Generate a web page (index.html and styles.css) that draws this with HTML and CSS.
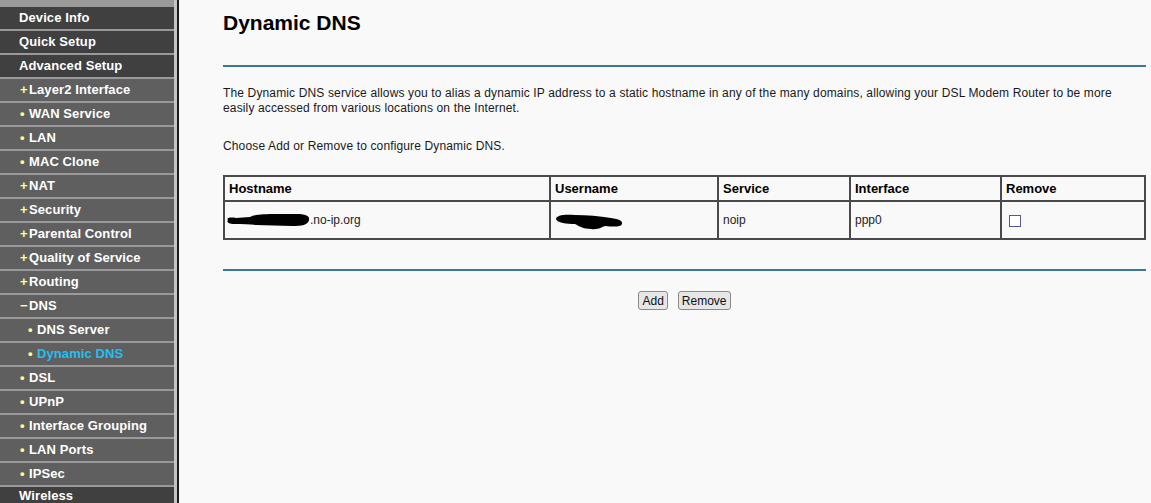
FILE: index.html
```html
<!DOCTYPE html>
<html lang="en">
<head>
    <meta charset="UTF-8">
    <title>Dynamic DNS</title>
    <link rel="stylesheet" href="styles.css">
</head>
<body>

<div class="page">

    <!-- Left menu -->
    <div class="menu">
        <div class="item top">Device Info</div>
        <div class="item top">Quick Setup</div>
        <div class="item top">Advanced Setup</div>
        <div class="item sub"><span class="mark">+</span>Layer2 Interface</div>
        <div class="item sub"><span class="mark">&bull;</span>WAN Service</div>
        <div class="item sub"><span class="mark">&bull;</span>LAN</div>
        <div class="item sub"><span class="mark">&bull;</span>MAC Clone</div>
        <div class="item sub"><span class="mark">+</span>NAT</div>
        <div class="item sub"><span class="mark">+</span>Security</div>
        <div class="item sub"><span class="mark">+</span>Parental Control</div>
        <div class="item sub"><span class="mark">+</span>Quality of Service</div>
        <div class="item sub"><span class="mark">+</span>Routing</div>
        <div class="item sub"><span class="mark">&minus;</span>DNS</div>
        <div class="item subsub"><span class="mark">&bull;</span>DNS Server</div>
        <div class="item subsub active"><span class="mark">&bull;</span>Dynamic DNS</div>
        <div class="item sub"><span class="mark">&bull;</span>DSL</div>
        <div class="item sub"><span class="mark">&bull;</span>UPnP</div>
        <div class="item sub"><span class="mark">&bull;</span>Interface Grouping</div>
        <div class="item sub"><span class="mark">&bull;</span>LAN Ports</div>
        <div class="item sub"><span class="mark">&bull;</span>IPSec</div>
        <div class="item top last">Wireless</div>
    </div>

    <!-- Main content -->
    <div class="content">
        <h1>Dynamic DNS</h1>
        <div class="rule"></div>

        <p class="intro">The Dynamic DNS service allows you to alias a dynamic IP address to a static hostname in any of the many domains, allowing your DSL Modem Router to be more easily accessed from various locations on the Internet.</p>
        <p class="hint">Choose Add or Remove to configure Dynamic DNS.</p>

        <table class="ddns">
            <tr>
                <th class="c-host">Hostname</th>
                <th class="c-user">Username</th>
                <th class="c-service">Service</th>
                <th class="c-iface">Interface</th>
                <th class="c-remove">Remove</th>
            </tr>
            <tr>
                <td><svg class="blot host-blot" viewBox="0 0 84 14" width="84" height="14"><path d="M2 7 C0 5 4 4 10 5 L24 4 C30 0 50 1 70 1 C80 1 84 3 83 7 C82 12 76 13 66 13 L30 12 C24 11 16 11 8 11 C3 11 0 9 2 7Z"/></svg>.no-ip.org</td>
                <td><svg class="blot user-blot" viewBox="0 0 68 17" width="68" height="17"><path d="M1 6 C1 2 10 1 20 2 C32 2 44 3 56 5 C64 6 68 8 67 11 C66 14 60 14 50 13 C46 14 44 17 36 16 C28 16 24 13 20 11 C12 11 2 10 1 6Z"/></svg></td>
                <td>noip</td>
                <td>ppp0</td>
                <td><input type="checkbox" class="check"></td>
            </tr>
        </table>

        <div class="rule lower"></div>

        <div class="actions">
            <button>Add</button>
            <button>Remove</button>
        </div>
    </div>

</div>

</body>
</html>
```

FILE: styles.css
```css
body {
    margin: 0;
    padding: 0;
    font-family: "Liberation Sans", Arial, sans-serif;
    background-color: #f9f9f9;
    height: 503px;
    overflow: hidden;
}
.page {
    display: flex;
    height: 503px;
}

/* left menu */
.menu {
    width: 174px;
    flex-shrink: 0;
    background-color: #9a9a9a;
    padding-top: 7px;
    border-right: 3px solid #c4c4c4;
    box-shadow: 2px 0 0 #1c1c1c;
    margin-right: 2px;
    overflow: hidden;
}
.item {
    height: 22px;
    line-height: 21px;
    margin-bottom: 2px;
    color: #fff;
    font-size: 13px;
    font-weight: bold;
    letter-spacing: 0.1px;
    white-space: nowrap;
}
.item.top {
    background-color: #404040;
    padding-left: 19px;
}
.item.sub {
    background-color: #5f5f5f;
    padding-left: 20px;
}
.item.subsub {
    background-color: #5f5f5f;
    padding-left: 28px;
}
.item.last {
    height: 40px;
    line-height: 18px;
}
.mark {
    display: inline-block;
    width: 9px;
    color: #ffff99;
}
.item.active {
    color: #1fc0f2;
}

/* content */
.content {
    flex: 1;
    padding: 11px 7px 0 44px;
    color: #1a1a1a;
}
h1 {
    margin: 0;
    font-size: 21px;
    line-height: 24px;
    color: #000;
}
.rule {
    height: 2px;
    background-color: #3a7696;
    margin-top: 30px;
}
.rule.lower {
    margin-top: 29px;
}
.intro, .hint {
    font-size: 12px;
    line-height: 15px;
    letter-spacing: 0.14px;
    margin: 19px 0 0 0;
}
.hint {
    margin-top: 23px;
}

/* table */
.ddns {
    width: 921px;
    margin-top: 21px;
    border-collapse: collapse;
    border: 2px solid #4a4a4a;
    table-layout: fixed;
}
.ddns th, .ddns td {
    border: 2px solid #4a4a4a;
    text-align: left;
    padding: 0 4px;
}
.ddns th {
    height: 23px;
    font-size: 13px;
    font-weight: bold;
    color: #000;
}
.ddns td {
    height: 36px;
    font-size: 12px;
    color: #222;
}
.c-host { width: 316px; }
.c-user { width: 158px; }
.c-service { width: 122px; }
.c-iface { width: 141px; }
.c-remove { width: 134px; }

.blot {
    vertical-align: middle;
    fill: #000;
}
.host-blot {
    margin-left: -3px;
}
.user-blot {
    margin-top: 2px;
}
.check {
    -webkit-appearance: none;
    appearance: none;
    width: 12px;
    height: 12px;
    margin: 0 0 0 3px;
    border: 1px solid #55559c;
    background-color: #fff;
    vertical-align: middle;
}

/* buttons */
.actions {
    display: flex;
    justify-content: center;
    gap: 10px;
    margin-top: 20px;
}
button {
    font-family: "Liberation Sans", Arial, sans-serif;
    font-size: 12px;
    height: 19px;
    padding: 0 3px;
    color: #111;
    background-color: #e6e6e6;
    border: 1px solid #8a8a8a;
    border-radius: 3px;
}
```
